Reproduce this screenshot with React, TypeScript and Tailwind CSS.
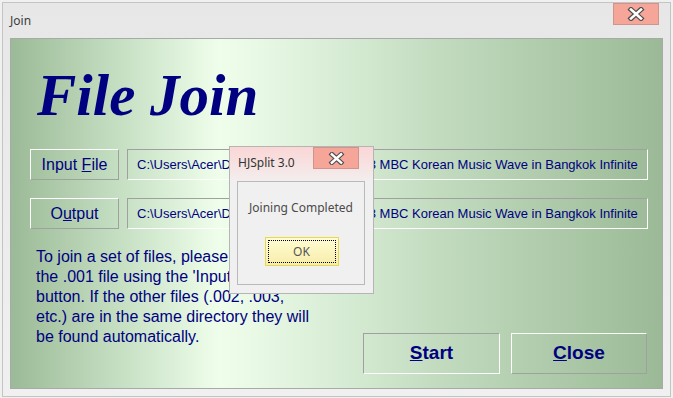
import React from 'react'

function CloseGlyph({ w = 18, h = 14 }: { w?: number; h?: number }) {
  return (
    <svg width={w} height={h} viewBox="0 0 18 14">
      <path d="M4 2.5 L14 11.5 M14 2.5 L4 11.5" stroke="#4d4d4d" strokeWidth="5" strokeLinecap="square" fill="none" />
      <path d="M4 2.5 L14 11.5 M14 2.5 L4 11.5" stroke="#ffffff" strokeWidth="2.6" strokeLinecap="square" fill="none" />
    </svg>
  )
}

const raised = 'border border-t-white border-l-white border-r-[#a0a0a0] border-b-[#a0a0a0]'
const sunken = 'border border-t-[#a0a0a0] border-l-[#a0a0a0] border-r-white border-b-white'

function PathField({ value }: { value: string }) {
  return (
    <div className={`w-[521px] h-[31px] ${sunken} flex items-center`}>
      <div className="ml-[9px] mr-[8px] overflow-hidden whitespace-nowrap text-[13px] text-[#000080]">{value}</div>
    </div>
  )
}

export default function App() {
  const path = 'C:\\Users\\Acer\\Downloads\\Videos\\130713 MBC Korean Music Wave in Bangkok Infinite'

  return (
    <div className="relative w-[673px] h-[398px] overflow-hidden bg-[#f0f0f0] font-['Liberation_Sans',Arial,sans-serif]">
      <div className="ml-[2px] mt-[2px] w-[669px] h-[395px] border border-[#c4c4c4] bg-gradient-to-b from-[#e7e7e7] to-[#f0f0f0] flex flex-col">
        {/* title bar */}
        <div className="h-[35px] flex items-start">
          <div className="pl-[7px] pt-[9px] text-[12px] text-[#3c3c3c] font-['Noto_Sans',sans-serif]">Join</div>
          <div className="ml-auto mr-[11px] w-[46px] h-[22px] bg-[#f5a699] border border-[#cf958c] flex items-center justify-center">
            <CloseGlyph />
          </div>
        </div>

        {/* green panel */}
        <div className="mx-[7px] h-[351px] border border-[#a9a9a9] bg-[linear-gradient(to_right,#9bba97_0%,#c9e2c6_18%,#effeeb_32%,#dbefd8_48%,#c3dcc0_65%,#afcbab_82%,#9bb997_100%)] flex flex-col">
          <div className="ml-[26px] mt-[26px] h-[60px] leading-[60px] text-[59px] font-bold italic text-[#000080] font-['Liberation_Serif','Times_New_Roman',serif]">
            File Join
          </div>

          <div className="ml-[19px] mt-[24px] flex gap-[8px]">
            <div className={`w-[89px] h-[31px] ${raised} flex items-center justify-center text-[16px] text-[#000080]`}>
              <span>
                Input <span className="underline">F</span>ile
              </span>
            </div>
            <PathField value={path} />
          </div>

          <div className="ml-[19px] mt-[18px] flex gap-[8px]">
            <div className={`w-[89px] h-[31px] ${raised} flex items-center justify-center text-[16px] text-[#000080]`}>
              <span>
                O<span className="underline">u</span>tput
              </span>
            </div>
            <PathField value={path} />
          </div>

          <div className="flex-1 flex">
            <p className="ml-[25px] mt-[18px] text-[16px] leading-[20px] text-[#000080] whitespace-nowrap">
              To join a set of files, please select
              <br />
              the .001 file using the 'Input File'
              <br />
              button. If the other files (.002, .003,
              <br />
              etc.) are in the same directory they will
              <br />
              be found automatically.
            </p>
            <div className="ml-auto mr-[15px] mb-[14px] self-end flex gap-[11px]">
              <div className={`w-[137px] h-[41px] ${sunken} flex items-center justify-center text-[19px] font-bold text-[#000080]`}>
                <span>
                  <span className="underline">S</span>tart
                </span>
              </div>
              <div className={`w-[136px] h-[41px] ${raised} flex items-center justify-center text-[19px] font-bold text-[#000080]`}>
                <span>
                  <span className="underline">C</span>lose
                </span>
              </div>
            </div>
          </div>
        </div>
      </div>

      {/* message box */}
      <div className="absolute left-[229px] top-[146px] w-[145px] h-[148px] border border-[#b5b5b5] bg-[#f0f0f0] font-['Noto_Sans',sans-serif]">
        <div className="relative h-[34px] bg-gradient-to-b from-[#fad6d6] to-[#f3eeee]">
          <div className="pl-[8px] pt-[7px] text-[12px] text-[#333333]">HJSplit 3.0</div>
          <div className="absolute left-[83px] top-0 w-[46px] h-[22px] bg-[#f5a699] border border-[#cf958c] flex items-center justify-center">
            <CloseGlyph w={17} h={13} />
          </div>
        </div>
        <div className="mx-[7px] w-[128px] h-[104px] border border-[#b9b9b9] flex flex-col items-center">
          <div className="mt-[18px] text-[12px] leading-[16px] text-[#4a4a4a]">Joining Completed</div>
          <div className="mt-[21px] ml-[1px] w-[74px] h-[29px] border border-[#e6d94f] bg-gradient-to-b from-[#fffcd3] to-[#f7eda9] p-[2px]">
            <div className="w-full h-full border border-dotted border-black flex items-center justify-center text-[12px] text-[#555555]">
              OK
            </div>
          </div>
        </div>
      </div>
    </div>
  )
}
